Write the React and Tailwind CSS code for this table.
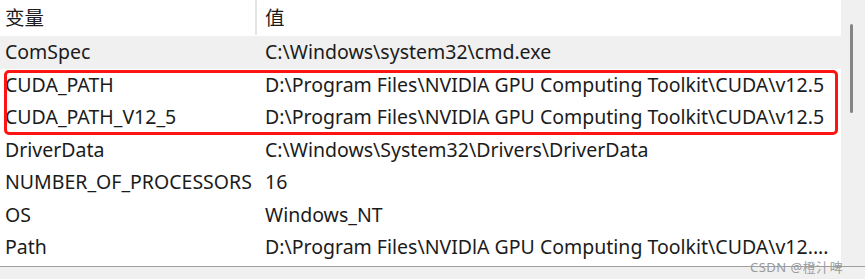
const rows = [
  { name: 'ComSpec', value: 'C:\\Windows\\system32\\cmd.exe' },
  { name: 'CUDA_PATH', value: 'D:\\Program Files\\NVIDlA GPU Computing Toolkit\\CUDA\\v12.5' },
  { name: 'CUDA_PATH_V12_5', value: 'D:\\Program Files\\NVIDlA GPU Computing Toolkit\\CUDA\\v12.5' },
  { name: 'DriverData', value: 'C:\\Windows\\System32\\Drivers\\DriverData' },
  { name: 'NUMBER_OF_PROCESSORS', value: '16' },
  { name: 'OS', value: 'Windows_NT' },
  { name: 'Path', value: 'D:\\Program Files\\NVIDlA GPU Computing Toolkit\\CUDA\\v12....' },
]

const Row = ({ row, shaded }) => (
  <div className={`flex h-[32.5px] items-center ${shaded ? 'bg-[#f0f0f0]' : ''}`}>
    <div className="w-[260px] shrink-0 pl-[5px] whitespace-nowrap">{row.name}</div>
    <div className="pl-[5px] whitespace-nowrap">{row.value}</div>
  </div>
)

const App = () => {
  return (
    <div
      className="relative flex h-[279px] w-[865px] flex-col overflow-hidden bg-white text-[19.5px] leading-[22px] text-[#1b1b1b]"
      style={{ fontFamily: '"Noto Sans", "Noto Sans CJK SC", sans-serif' }}
    >
      <div className="flex h-[266px]">
        <div className="w-[841px] shrink-0">
          <div className="flex h-[36px] items-center">
            <div className="w-[255px] shrink-0 pl-[5px]">变量</div>
            <div className="h-[35px] w-[2px] self-start bg-[#e5e5e5]" />
            <div className="pl-[8px]">值</div>
          </div>
          <Row row={rows[0]} shaded />
          <div className="relative">
            <Row row={rows[1]} />
            <Row row={rows[2]} />
            <div className="pointer-events-none absolute top-[1px] bottom-[-1px] left-[4px] w-[834px] rounded-[5px] border-[3px] border-[#ff1414]" />
          </div>
          <Row row={rows[3]} />
          <Row row={rows[4]} />
          <Row row={rows[5]} />
          <Row row={rows[6]} />
        </div>
        <div className="flex flex-1 justify-center bg-[#f0f0f0] pt-[24px]">
          <div className="ml-[-3px] h-[89px] w-[3px] rounded-full bg-[#858585]" />
        </div>
      </div>
      <div className="h-[13px] border-t border-[#a0a0a0] bg-[#f0f0f0]" />
      <div
        className="absolute top-[261px] left-[750px] text-[13px] leading-none tracking-[0.5px] text-[#9a9a9a]"
        style={{ fontFamily: '"Noto Sans", "Noto Sans CJK SC", sans-serif' }}
      >
        CSDN @橙汁啤
      </div>
    </div>
  )
}

export default App
